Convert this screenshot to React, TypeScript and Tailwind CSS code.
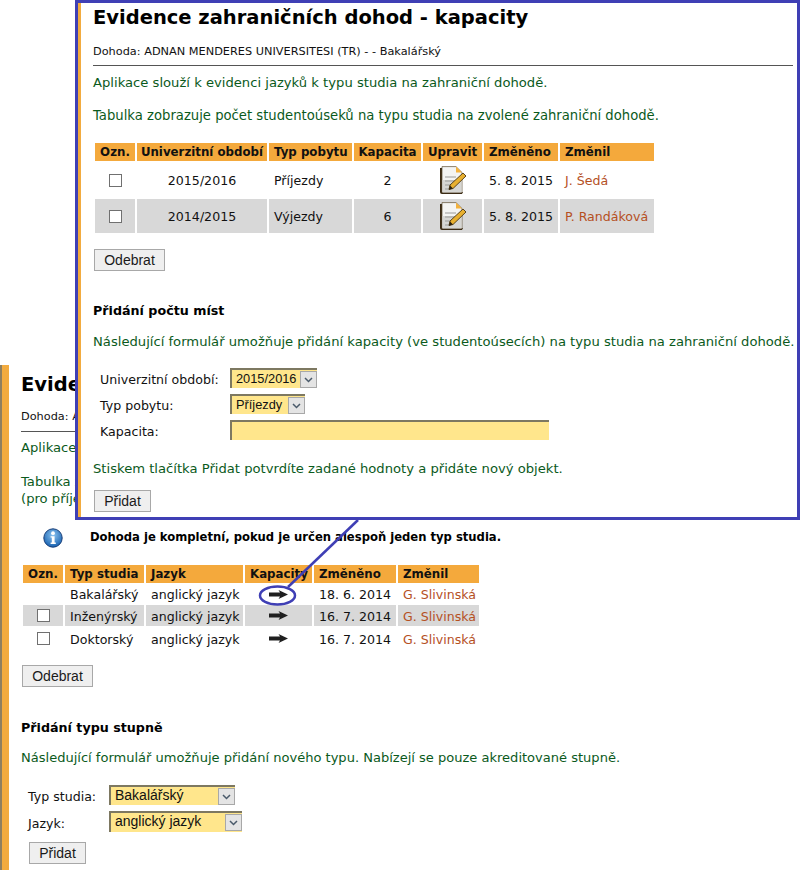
import React from "react";

const NoteIcon = () => (
  <svg width="28" height="29" viewBox="0 0 28 29" className="mx-auto block">
    <path d="M1 2 L1 26 Q1 28 3 28 L23 28 L24 26 L3 26 L3 2 Z" fill="#3a2a14" />
    <path d="M3 0.6 L17 0.6 L23 6.5 L23 26.5 L3 26.5 Z" fill="#f4f4f2" stroke="#5a4a30" strokeWidth="0.7" />
    <path d="M17 0.6 L23 6.5 L17 6.5 Z" fill="#f4b23c" />
    <rect x="3.5" y="14" width="19" height="12.5" fill="#d6d6d3" />
    <path d="M6 11 H17 M6 15 H16 M6 19 H13 M6 23 H12" stroke="#9a9a98" strokeWidth="1.2" />
    <path d="M11 19 L24 7 L27 10 L14 22.5 L10 23.5 Z" fill="#e8b030" stroke="#4a3410" strokeWidth="0.9" />
    <path d="M10 23.5 L11 19.5 L14 22.5 Z" fill="#2a2010" />
  </svg>
);

const ArrowIcon = () => (
  <svg width="19" height="9" viewBox="0 0 19 9" className="mx-auto block">
    <path d="M0 2.6 H11 L9.5 0 L19 4.5 L9.5 9 L11 6.4 H0 Z" fill="#1f1f1f" />
  </svg>
);

const InfoIcon = () => (
  <svg width="20" height="20" viewBox="0 0 20 20" className="block">
    <defs>
      <radialGradient id="ig" cx="50%" cy="35%" r="65%">
        <stop offset="0%" stopColor="#8cc4f0" />
        <stop offset="100%" stopColor="#1560b0" />
      </radialGradient>
    </defs>
    <circle cx="10" cy="10" r="9.2" fill="url(#ig)" stroke="#1a3f78" strokeWidth="1" />
    <circle cx="10" cy="5.2" r="1.9" fill="#fff" />
    <path d="M7.6 8.2 H11.6 V14.6 H12.8 V16 H7.6 V14.6 H8.8 V9.6 H7.6 Z" fill="#fff" />
  </svg>
);

const Check = () => (
  <input type="checkbox" className="block mx-auto appearance-none w-[13px] h-[13px] bg-white border border-[#707070]" />
);

const Button = ({ label, w, cls = "" }: { label: string; w: string; cls?: string }) => (
  <button
    type="button"
    className={`${w} ${cls} block h-[22px] bg-[#efefef] border border-[#a8a8a8] text-[14px] leading-[20px] text-[#1a1a1a] text-center`}
    style={{ fontFamily: '"Liberation Sans", Arial, sans-serif' }}
  >
    {label}
  </button>
);

const Select = ({ value, w, tall = false, small = false }: { value: string; w: string; tall?: boolean; small?: boolean }) => (
  <div
    className={`${w} ${tall ? "h-[21px]" : "h-[20px]"} ${small ? "text-[12.8px]" : "text-[14px]"} flex bg-[#ffe68c] border-t-2 border-l-2 border-[#7d7861] pl-1 leading-[17px] text-[#111]`}
    style={{ fontFamily: '"Liberation Sans", Arial, sans-serif' }}
  >
    <span className="flex-1 whitespace-nowrap">{value}</span>
    <span className="w-[17px] h-[17px] mt-[1px] flex items-center justify-center bg-[#e4e4e4] border border-[#a8a8a8]">
      <svg width="9" height="6" viewBox="0 0 9 6">
        <path d="M1 1 L4.5 4.5 L8 1" fill="none" stroke="#4a5a6a" strokeWidth="1.5" />
      </svg>
    </span>
  </div>
);

const thBase = "bg-[#f4a93c] h-[18px] py-0 font-bold text-[11.8px] leading-[18px] whitespace-nowrap text-[#111]";
const thL = `${thBase} px-[5px] text-left`;
const thC = `${thBase} px-0 text-center`;
const tdT = "px-[5px] pt-[2px] pb-0 leading-[16px] whitespace-nowrap";
const tdC = "px-0 pt-[2px] pb-0 leading-[16px] text-center";
const label = "pt-[4px] leading-[16px]";

const font = { fontFamily: '"DejaVu Sans", Verdana, sans-serif' };

export default function App() {
  return (
    <div className="relative w-[802px] h-[870px] overflow-hidden bg-white text-[12.6px] text-[#111]" style={font}>
      {/* underlying page */}
      <div className="pt-[365px]">
        <div className="h-[505px] border-l-2 border-[#8f7f5f]">
          <div className="h-full border-l-[7px] border-[#f2ab3f] pl-[12px] pt-[7px]">
            <h1 className="text-[19.5px] font-bold leading-[26px] text-black whitespace-nowrap">
              Evidence zahraničních dohod
            </h1>
            <p className="text-[11.3px] leading-[14px] mt-[12px] whitespace-nowrap">Dohoda: ADNAN MENDERES UNIVERSITESI (TR)</p>
            <div className="h-px bg-[#555] mt-[7px] w-[500px]" />
            <p className="text-[#0b5a1c] text-[13.15px] leading-[16px] mt-[8px]">Aplikace slouží k evidenci typů studia</p>
            <p className="text-[#0b5a1c] text-[13.15px] leading-[17px] mt-[17px]">
              Tabulka zobrazuje typy studia
              <br />
              (pro příjezdy a výjezdy)
            </p>
            <div className="flex items-center mt-[19px] h-[24px]">
              <span className="ml-[22px] w-[47px]">
                <InfoIcon />
              </span>
              <b className="text-[11.6px] whitespace-nowrap text-black">
                Dohoda je kompletní, pokud je určen alespoň jeden typ studia.
              </b>
            </div>
            <table className="table-fixed w-[460px] border-separate border-spacing-[2px] mt-[13px]">
              <thead>
                <tr>
                  <th className={`${thC} w-[40px]`}>Ozn.</th>
                  <th className={`${thL} w-[79px]`}>Typ studia</th>
                  <th className={`${thL} w-[97px]`}>Jazyk</th>
                  <th className={`${thL} w-[67px]`}>Kapacity</th>
                  <th className={`${thL} w-[82px]`}>Změněno</th>
                  <th className={`${thL} w-[81px]`}>Změnil</th>
                </tr>
              </thead>
              <tbody>
                {[
                  { t: "Bakalářský", d: "18. 6. 2014", c: false, g: false, h: "h-[18px]" },
                  { t: "Inženýrský", d: "16. 7. 2014", c: true, g: true, h: "h-[21px]" },
                  { t: "Doktorský", d: "16. 7. 2014", c: true, g: false, h: "h-[21px]" },
                ].map((r) => (
                  <tr key={r.t} className={`${r.h} ${r.g ? "[&>td]:bg-[#d8d8d8]" : ""}`}>
                    <td className="p-0">{r.c && <Check />}</td>
                    <td className={tdT}>{r.t}</td>
                    <td className={tdT}>anglický jazyk</td>
                    <td className="p-0">
                      <ArrowIcon />
                    </td>
                    <td className={tdT}>{r.d}</td>
                    <td className={`${tdT} text-[#b5501f]`}>G. Slivinská</td>
                  </tr>
                ))}
              </tbody>
            </table>
            <Button label="Odebrat" w="w-[71px]" cls="ml-px mt-[14px]" />
            <h3 className="font-bold text-[12.7px] leading-[16px] mt-[33px] text-black">Přidání typu stupně</h3>
            <p className="text-[#0b5a1c] text-[13.04px] leading-[16px] mt-[14px] whitespace-nowrap">
              Následující formulář umožňuje přidání nového typu. Nabízejí se pouze akreditované stupně.
            </p>
            <div className="grid grid-cols-[81px_auto] justify-start items-center gap-y-[6px] ml-[7px] mt-[19px]">
              <span className={label}>Typ studia:</span>
              <Select value="Bakalářský" w="w-[126px]" />
              <span className={label}>Jazyk:</span>
              <Select value="anglický jazyk" w="w-[133px]" tall />
            </div>
            <Button label="Přidat" w="w-[57px]" cls="ml-[8px] mt-[10px]" />
          </div>
        </div>
      </div>

      {/* magnified window */}
      <div className="absolute left-[75px] top-0 w-[725px] h-[520px] border-[3px] border-[#3f3fb5] bg-white">
        <div className="h-full border-l-[3px] border-[#f2ab3f] pl-[12px]">
          <h1 className="text-[19.5px] font-bold leading-[26px] pt-[2px] box-content text-black whitespace-nowrap">
            Evidence zahraničních dohod - kapacity
          </h1>
          <p className="text-[11.3px] leading-[14px] mt-[14px] whitespace-nowrap">
            Dohoda: ADNAN MENDERES UNIVERSITESI (TR) - - Bakalářský
          </p>
          <div className="h-px bg-[#555] mt-[6px] w-[700px]" />
          <p className="text-[#0b5a1c] text-[13.15px] leading-[16px] mt-[9px]">
            Aplikace slouží k evidenci jazyků k typu studia na zahraniční dohodě.
          </p>
          <p className="text-[#0b5a1c] text-[13.2px] leading-[16px] mt-[17px]">
            Tabulka zobrazuje počet studentoúseků na typu studia na zvolené zahraniční dohodě.
          </p>
          <table className="table-fixed w-[563px] border-separate border-spacing-[2px] mt-[17px]">
            <thead>
              <tr>
                <th className={`${thC} w-[40px]`}>Ozn.</th>
                <th className={`${thC} w-[130px]`}>Univerzitní období</th>
                <th className={`${thL} w-[83px]`}>Typ pobytu</th>
                <th className={`${thC} w-[67px]`}>Kapacita</th>
                <th className={`${thC} w-[59px]`}>Upravit</th>
                <th className={`${thL} w-[74px]`}>Změněno</th>
                <th className={`${thL} w-[94px]`}>Změnil</th>
              </tr>
            </thead>
            <tbody>
              {[
                { o: "2015/2016", t: "Příjezdy", k: "2", u: "J. Šedá", g: false },
                { o: "2014/2015", t: "Výjezdy", k: "6", u: "P. Randáková", g: true },
              ].map((r) => (
                <tr key={r.o} className={`h-[34px] ${r.g ? "[&>td]:bg-[#d8d8d8]" : ""}`}>
                  <td className="p-0"><Check /></td>
                  <td className={tdC}>{r.o}</td>
                  <td className={tdT}>{r.t}</td>
                  <td className={tdC}>{r.k}</td>
                  <td className="p-0"><NoteIcon /></td>
                  <td className={tdT}>5. 8. 2015</td>
                  <td className={`${tdT} text-[#b5501f]`}>{r.u}</td>
                </tr>
              ))}
            </tbody>
          </table>
          <Button label="Odebrat" w="w-[71px]" cls="ml-px mt-[14px]" />
          <h3 className="font-bold text-[12.7px] leading-[16px] mt-[32px] text-black">Přidání počtu míst</h3>
          <p className="text-[#0b5a1c] text-[13.15px] leading-[16px] mt-[15px] whitespace-nowrap">
            Následující formulář umožňuje přidání kapacity (ve studentoúsecích) na typu studia na zahraniční dohodě.
          </p>
          <div className="grid grid-cols-[130px_auto] justify-start items-center gap-y-[6px] ml-[7px] mt-[18px]">
            <span className={label}>Univerzitní období:</span>
            <Select value="2015/2016" w="w-[87px]" small />
            <span className={label}>Typ pobytu:</span>
            <Select value="Příjezdy" w="w-[75px]" small />
            <span className={label}>Kapacita:</span>
            <div className="w-[319px] h-[20px] bg-[#ffe68c] border-t-2 border-l-2 border-[#7d7861]" />
          </div>
          <p className="text-[#0b5a1c] text-[13.15px] leading-[16px] mt-[21px]">
            Stiskem tlačítka Přidat potvrdíte zadané hodnoty a přidáte nový objekt.
          </p>
          <Button label="Přidat" w="w-[57px]" cls="ml-px mt-[13px]" />
        </div>
      </div>

      {/* callout annotation */}
      <svg className="absolute left-0 top-0 pointer-events-none" width="802" height="870">
        <line x1="358" y1="520" x2="288" y2="587" stroke="#3f3fb5" strokeWidth="2.5" />
        <ellipse cx="277.5" cy="595.5" rx="17.5" ry="9" fill="none" stroke="#3f3fb5" strokeWidth="2.5" />
      </svg>
    </div>
  );
}
